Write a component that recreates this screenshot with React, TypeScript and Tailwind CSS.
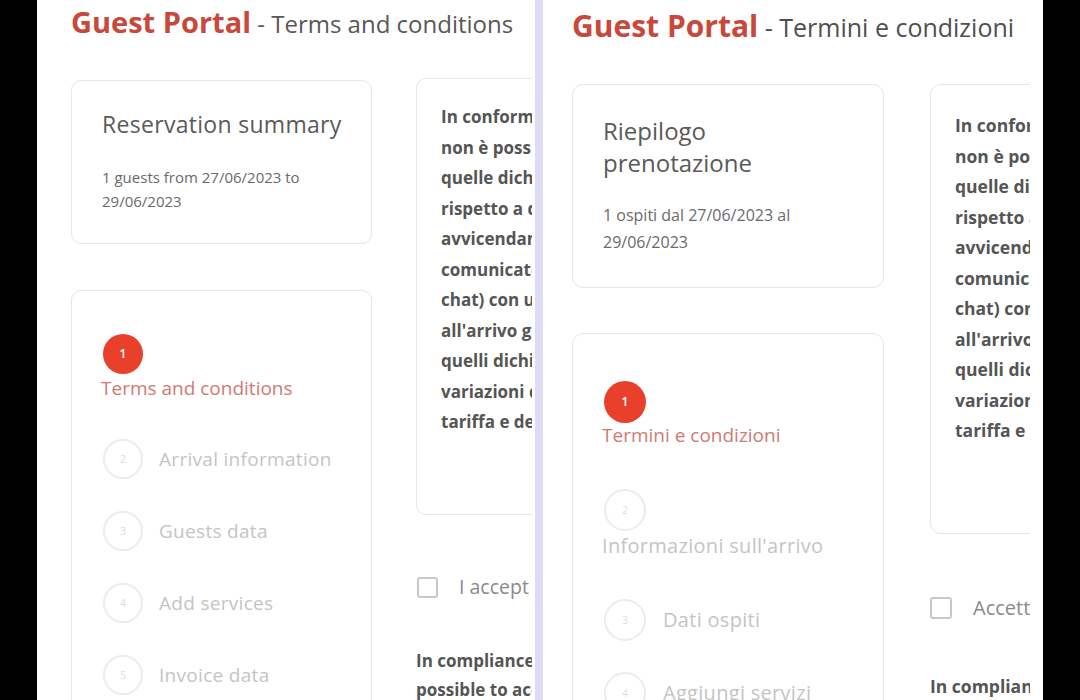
const termsLines = [
  'In conformità con le norme vigenti',
  'non è possibile ospitare persone diverse da',
  'quelle dichiarate in fase di prenotazione',
  'rispetto a quanto indicato, né effettuare',
  'avvicendamenti. Eventuali variazioni vanno',
  'comunicate in anticipo (via email o',
  'chat) con un preavviso adeguato. Se',
  "all'arrivo gli ospiti non corrispondono a",
  'quelli dichiarati, la struttura applicherà le',
  'variazioni di prezzo previste dalla',
  'tariffa e declina ogni responsabilità.',
];

const Circle = ({ n, active, size }: { n: number; active?: boolean; size: string }) => (
  <div
    className={`${size} shrink-0 rounded-full flex items-center justify-center ${
      active
        ? 'bg-[#e8402b] text-white text-[12px] font-semibold'
        : 'border-2 border-[#ececec] text-[#dcdcdc] text-[10px]'
    }`}
  >
    {n}
  </div>
);

const App = () => {
  return (
    <div className="flex w-[1080px] h-[700px] overflow-hidden bg-black font-['Open_Sans',sans-serif]">
      <div className="w-[37px] shrink-0 bg-black"></div>

      {/* English panel */}
      <div className="w-[498px] shrink-0 bg-white pl-[34px] pr-[3px] overflow-hidden">
        <h1 className="pt-[2px] leading-[40px] whitespace-nowrap">
          <span className="text-[29px] font-bold text-[#c9483c]">Guest Portal</span>
          <span className="text-[24px] text-[#585858]"> - Terms and conditions</span>
        </h1>

        <div className="mt-[31px] flex items-start gap-[44px] overflow-hidden">
          <div className="w-[301px] shrink-0">
            <div className="mt-[2px] rounded-[10px] border border-[#e6e6e6] px-[30px] pt-[28px] pb-[30px] h-[164px]">
              <div className="text-[23px] leading-[30px] text-[#5a5a5a] tracking-[0.3px] whitespace-nowrap">Reservation summary</div>
              <div className="mt-[26px] text-[15px] leading-[24px] text-[#6a6a6a]">
                1 guests from 27/06/2023 to
                <br />
                29/06/2023
              </div>
            </div>

            <div className="mt-[46px] rounded-[10px] border border-[#e6e6e6] pl-[31px] pt-[43px] h-[430px]">
              <Circle n={1} active size="w-[40px] h-[40px]" />
              <div className="text-[19px] leading-[28px] text-[#d07a72] -ml-[2px]">Terms and conditions</div>
              <div className="mt-[37px] flex flex-col gap-[32px]">
                {['Arrival information', 'Guests data', 'Add services', 'Invoice data'].map((s, i) => (
                  <div key={s} className="flex items-center gap-[16px]">
                    <Circle n={i + 2} size="w-[40px] h-[40px]" />
                    <span className="text-[19px] tracking-[0.3px] text-[#c4c4c4] whitespace-nowrap">{s}</span>
                  </div>
                ))}
              </div>
            </div>
          </div>

          <div className="w-[320px] shrink-0">
            <div className="h-[437px] rounded-[10px] border border-[#e6e6e6] pl-[24px] pt-[23px]">
              {termsLines.map((l) => (
                <div key={l} className="whitespace-nowrap text-[17px] leading-[30.5px] font-bold text-[#555]">
                  {l}
                </div>
              ))}
            </div>
            <div className="mt-[58px] flex items-center gap-[21px] h-[28px] pl-[1px]">
              <div className="w-[21px] h-[21px] shrink-0 rounded-[3px] border-2 border-[#c8c8c8]"></div>
              <span className="text-[19.5px] text-[#8a8a8a] whitespace-nowrap">I accept the terms and conditions</span>
            </div>
            <div className="mt-[45px] text-[17px] leading-[29px] font-bold text-[#555] whitespace-nowrap">
              <div>In compliance with current regulations, it is not</div>
              <div>possible to accommodate people other than</div>
            </div>
          </div>
        </div>
      </div>

      <div className="w-[8px] shrink-0 bg-[#dddcf4]"></div>

      {/* Italian panel */}
      <div className="w-[500px] shrink-0 bg-white pl-[29px] pr-[13px] overflow-hidden">
        <h1 className="pt-[5px] leading-[42px] whitespace-nowrap">
          <span className="text-[30px] font-bold text-[#c9483c]">Guest Portal</span>
          <span className="text-[25px] text-[#4f4f4f]"> - Termini e condizioni</span>
        </h1>

        <div className="mt-[32px] flex items-start gap-[46px] overflow-hidden">
          <div className="w-[312px] shrink-0">
            <div className="rounded-[11px] border border-[#e6e6e6] px-[30px] pt-[30px] h-[204px]">
              <div className="text-[24px] leading-[32px] text-[#5a5a5a]">
                Riepilogo
                <br />
                prenotazione
              </div>
              <div className="mt-[23px] text-[16px] leading-[27px] text-[#6a6a6a]">
                1 ospiti dal 27/06/2023 al
                <br />
                29/06/2023
              </div>
            </div>

            <div className="mt-[45px] rounded-[11px] border border-[#e6e6e6] pl-[31px] pt-[47px] h-[420px]">
              <Circle n={1} active size="w-[42px] h-[42px]" />
              <div className="text-[19px] leading-[24px] text-[#d07a72] -ml-[2px]">Termini e condizioni</div>
              <div className="mt-[42px]">
                <Circle n={2} size="w-[42px] h-[42px]" />
                <div className="mt-[3px] text-[20px] tracking-[0.3px] leading-[24px] text-[#c4c4c4] -ml-[2px] whitespace-nowrap">
                  Informazioni sull'arrivo
                </div>
              </div>
              <div className="mt-[41px] flex flex-col gap-[31px]">
                {['Dati ospiti', 'Aggiungi servizi'].map((s, i) => (
                  <div key={s} className="flex items-center gap-[17px]">
                    <Circle n={i + 3} size="w-[42px] h-[42px]" />
                    <span className="text-[20px] tracking-[0.3px] text-[#c4c4c4] whitespace-nowrap">{s}</span>
                  </div>
                ))}
              </div>
            </div>
          </div>

          <div className="w-[320px] shrink-0">
            <div className="h-[450px] rounded-[11px] border border-[#e6e6e6] pl-[24px] pt-[25px]">
              {termsLines.map((l) => (
                <div key={l} className="whitespace-nowrap text-[17.5px] leading-[30.5px] font-bold text-[#555]">
                  {l}
                </div>
              ))}
            </div>
            <div className="mt-[60px] flex items-center gap-[21px] h-[28px]">
              <div className="w-[22px] h-[22px] shrink-0 rounded-[3px] border-2 border-[#c8c8c8]"></div>
              <span className="text-[20px] text-[#8a8a8a] whitespace-nowrap">Accetto i termini e le condizioni</span>
            </div>
            <div className="mt-[50px] text-[17.5px] leading-[29px] font-bold text-[#555] whitespace-nowrap">
              <div>In compliance with current regulations, it is not</div>
              <div>possible to accommodate people other than</div>
            </div>
          </div>
        </div>
      </div>

      <div className="flex-1 bg-black"></div>
    </div>
  );
};

export default App;
